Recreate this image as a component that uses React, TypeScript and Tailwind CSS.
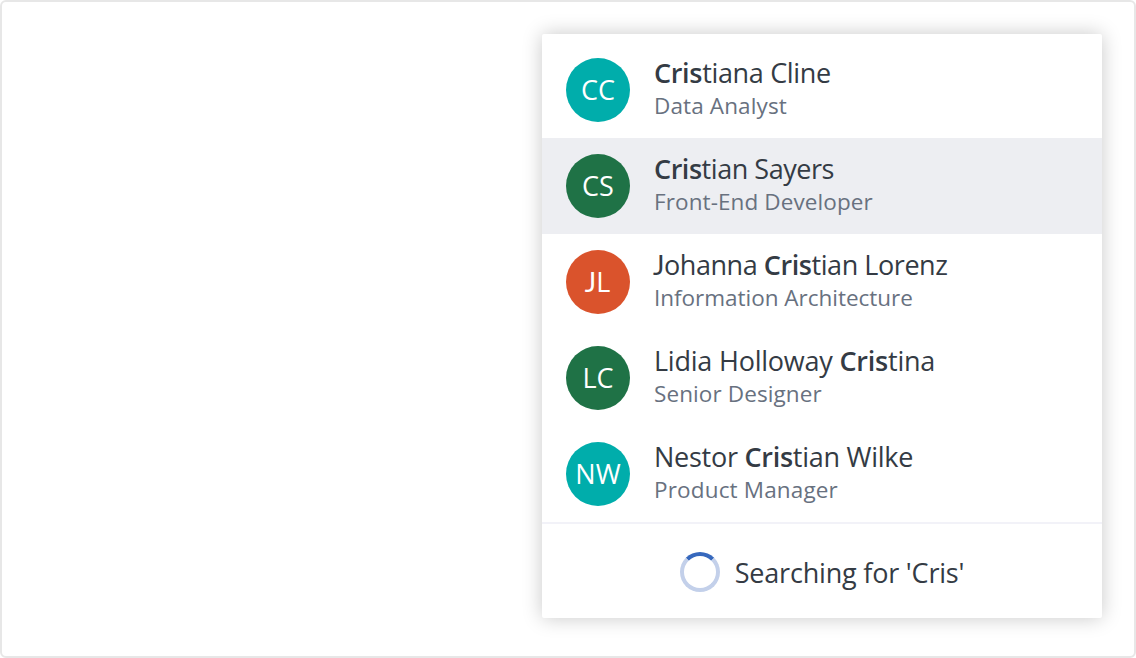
const people = [
  { initials: "CC", color: "bg-[#00adab]", before: "", after: "tiana Cline", role: "Data Analyst", name: "tracking-[-0.33px]", sub: "tracking-[0.12px]" },
  { initials: "CS", color: "bg-[#1f7246]", before: "", after: "tian Sayers", role: "Front-End Developer", active: true, name: "tracking-[-0.46px]", sub: "tracking-[0.1px]" },
  { initials: "JL", color: "bg-[#da532c]", before: "Johanna ", after: "tian Lorenz", role: "Information Architecture", name: "tracking-[-0.44px]", sub: "tracking-[-0.02px]" },
  { initials: "LC", color: "bg-[#1f7246]", before: "Lidia Holloway ", after: "tina", role: "Senior Designer", name: "tracking-[-0.22px]", sub: "tracking-[0.1px]" },
  { initials: "NW", color: "bg-[#00adab]", before: "Nestor ", after: "tian Wilke", role: "Product Manager", name: "tracking-[-0.26px]", sub: "tracking-[0.16px]" },
];

function Label({ text }: { text: string }) {
  return text.startsWith("J") ? (
    <>
      <span className="-ml-px font-['Lato',sans-serif]">J</span>
      {text.slice(1)}
    </>
  ) : (
    <>{text}</>
  );
}

export default function App() {
  return (
    <div className="flex h-[658px] w-[1136px] justify-end rounded-md border-2 border-[#e7e7e7] bg-white pt-8 pr-8 font-['Open_Sans','Noto_Sans',sans-serif]">
      <div className="flex h-[584px] w-[560px] flex-col rounded-xs bg-white pt-2 shadow-[0_0_20px_rgba(0,0,0,0.22)]">
        {people.map((p) => (
          <div key={p.role} className={`flex h-24 shrink-0 gap-6 px-6 ${p.active ? "bg-[#edeef2]" : ""}`}>
            <div className={`mt-4 flex size-16 items-center justify-center rounded-full pt-px text-[27px] text-white ${p.color}`}>
              <span>
                <Label text={p.initials} />
              </span>
            </div>
            <div className="pt-[13px] whitespace-pre">
              <div className={`h-9 text-[27px] leading-9 text-[#343b44] ${p.name}`}>
                <Label text={p.before} />
                <span className="font-semibold">Cris</span>
                {p.after}
              </div>
              <div className={`-mt-px h-8 text-[22.5px] leading-8 text-[#68717f] ${p.sub}`}>{p.role}</div>
            </div>
          </div>
        ))}
        <div className="flex flex-1 items-center justify-center gap-[15px] border-t-2 border-[#f2f2f8] pt-0.5">
          <div className="size-10 rounded-full border-4 border-[#c3d0ea] border-t-[#3668bd]" />
          <div className="pt-0.5 text-[27px] tracking-[-0.2px] text-[#343b44]">Searching for 'Cris'</div>
        </div>
      </div>
    </div>
  );
}
